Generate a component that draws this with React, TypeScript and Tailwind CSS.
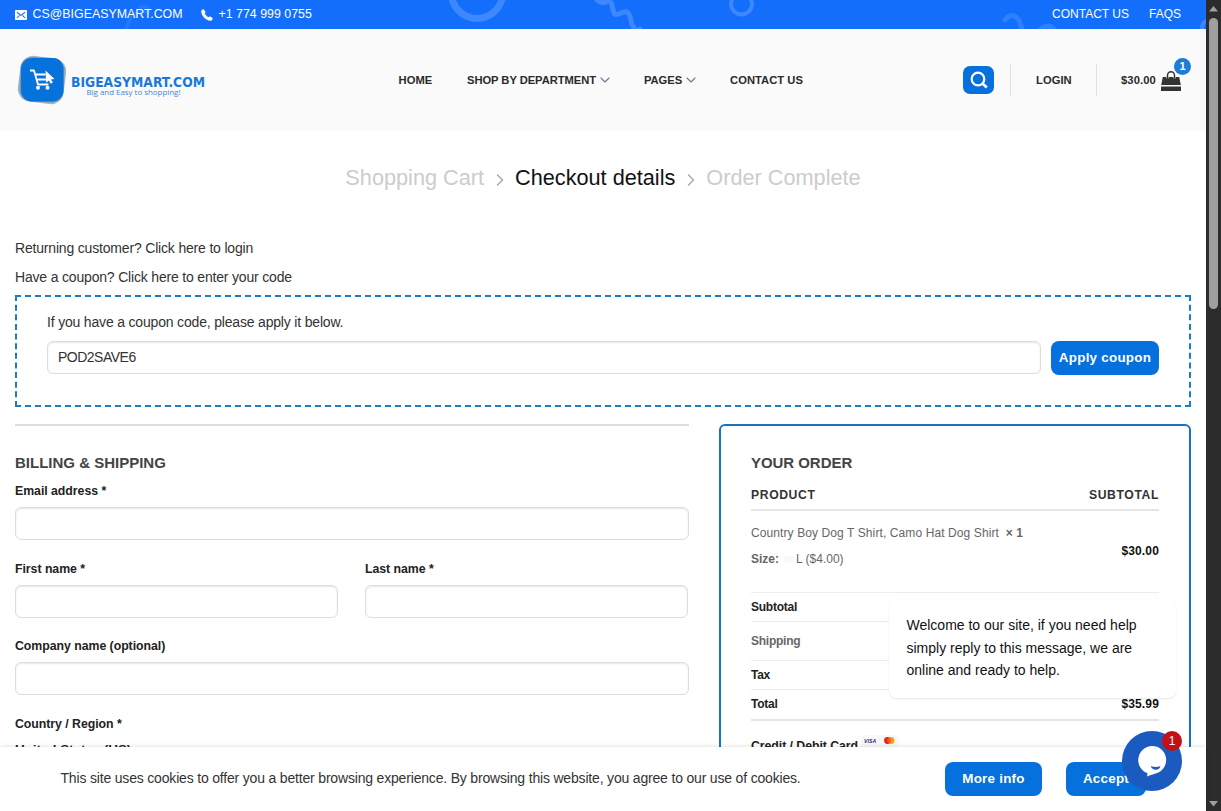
import type { ReactNode } from 'react';
import { ChevronDown, ChevronRight } from 'lucide-react';

const FONT = "font-['Liberation_Sans',Arial,sans-serif]";

const TopBar = () => (
  <div className="relative h-[29px] bg-[#126efb] overflow-hidden text-white text-[12.4px] leading-[29px]">
    {/* Background doodles */}
    <svg className="absolute inset-0" width="1206" height="29" fill="none" stroke="#3d88ff" strokeLinecap="round">
      <circle cx="477" cy="-7" r="25.5" strokeWidth="7" />
      <path d="M597 0q4 4 9 2t6 3 2 8 7 0 8 1 2 7 4 8 5 0" strokeWidth="5" strokeLinejoin="round" />
      <circle cx="741.500" cy="4" r="10.500" strokeWidth="4" />
      <path d="M1005 20q7-9 14 0l3 9M1041 29q7-6 13 0" strokeWidth="5" stroke="#2f80fd" />
      <path d="M140 7q9-3 8 5-12-3-17 6l-5 10" strokeWidth="4" stroke="#2478ff" />
      <path d="M1202 29q0-6 4-8" strokeWidth="4" />
    </svg>
    <div className="relative flex justify-between pl-[15px] pr-[25px]">
      <div className="flex">
        <div className="flex items-center h-[28px] w-[186px]">
          <svg width="12" height="10" viewBox="0 0 12 10" className="mr-[5.500px] mt-px">
            <rect width="12" height="10" rx="0.8" fill="white" />
            <path d="M2 2.2l4 3.2 4-3.2M2 8l2.5-2.7M10 8L7.500 5.300" fill="none" stroke="#126efb" strokeWidth="1.1" />
          </svg>
          <span className="whitespace-nowrap">CS@BIGEASYMART.COM</span>
        </div>
        <div className="flex items-center h-[28px]">
          <svg width="12" height="12" viewBox="0 0 12 12" className="mr-[5.500px] mt-px" fill="white">
            <path d="M2.600.3L4.700 2.900 3.700 4.600C4.400 6.100 5.800 7.500 7.400 8.300L9 7.200 11.800 9.200C11.500 10.800 10.500 11.800 9.400 11.800 4.700 11.500.5 7.100.2 2.600.2 1.500 1.200.5 2.600.3z" />
          </svg>
          <span className="whitespace-nowrap">+1 774 999 0755</span>
        </div>
      </div>
      <div className="flex gap-5 text-[12px]">
        <span>CONTACT US</span>
        <span>FAQS</span>
      </div>
    </div>
  </div>
);

const Logo = () => (
  <svg width="200" height="52" viewBox="0 0 200 52">
    <rect x="3" y="3" width="46" height="46" rx="13" fill="#a3b3c1" transform="rotate(7 26 26)" />
    <rect x="4" y="3.500" width="44" height="44.500" rx="12" fill="#7d9ab4" transform="rotate(3 26 26)" />
    <rect x="5" y="4" width="42.500" height="43.500" rx="11" fill="#0672dc" />
    <path d="M14 16.500h4l4 14h10.500M19.500 20.500h10M21 25.500h11" fill="none" stroke="white" strokeWidth="1.800" strokeLinejoin="round" />
    <path d="M29.500 16.500l9 8.500-3.600.4 2 3.200-2.100 1.200-2-3.300-2.700 2.300z" fill="white" />
    <circle cx="22" cy="33.800" r="2" fill="white" />
    <circle cx="31.500" cy="33.800" r="2" fill="white" />
    <text x="55" y="32.500" textLength="134" lengthAdjust="spacingAndGlyphs" fill="#1878da" fontFamily="DejaVu Sans" fontSize="13.500" fontWeight="700" letterSpacing="0">BIGEASYMART.COM</text>
    <text x="70.500" y="40.500" textLength="94" lengthAdjust="spacingAndGlyphs" fill="#3f86d6" fontFamily="Open Sans" fontSize="7.800" fontWeight="400" letterSpacing="0">Big and Easy to shopping!</text>
  </svg>
);

const Header = () => (
  <header className="flex items-center h-[102px] bg-[#fafafa] pl-[16px] text-[11.2px] font-bold text-[#2a2a2a] tracking-[0.05px]">
    <div className="w-[382px]">
      <Logo />
    </div>
    <nav className="flex items-center w-[565px]">
      <span className="w-[69px] pl-[0.5px]">HOME</span>
      <span className="w-[177px] flex items-center gap-px whitespace-nowrap tracking-[-0.05px]">
        SHOP BY DEPARTMENT <ChevronDown className="w-[16px] h-[16px] -my-1 text-[#777]" strokeWidth={1.6} />
      </span>
      <span className="w-[86px] flex items-center gap-px tracking-[-0.05px]">
        PAGES <ChevronDown className="w-[16px] h-[16px] -my-1 text-[#777]" strokeWidth={1.6} />
      </span>
      <span>CONTACT US</span>
    </nav>
    <button className="flex items-center justify-center w-[31px] h-[28px] rounded-[7px] bg-[#0670dc] text-white">
      <svg width="18" height="18" viewBox="0 0 18 18" fill="none" stroke="currentColor">
        <circle cx="8" cy="8" r="6.300" strokeWidth="2.200" />
        <path d="M12.500 12.500l4.300 4" strokeWidth="2.700" />
      </svg>
    </button>
    <div className="w-px h-[32px] bg-[#e2e2e2] ml-[16px]" />
    <span className="w-[85px] pl-[25px]">LOGIN</span>
    <div className="w-px h-[32px] bg-[#e2e2e2]" />
    <span className="w-[40px] ml-[24px] tracking-[0.1px]">$30.00</span>
    <div className="relative w-[20px] h-[21px]">
      <svg width="20" height="21" viewBox="0 0 20 21">
        <path d="M1.800 7h16.400l1.600 8H.2zM0 16.500h20V21H0z" fill="#333" />
        <path d="M6.500 8.500V5.200a3.500 3.500 0 0 1 7 0v3.300" fill="none" stroke="#fafafa" strokeWidth="2.400" />
        <path d="M6.500 9V5.200a3.500 3.500 0 0 1 7 0V9" fill="none" stroke="#333" strokeWidth="1.500" />
      </svg>
      <span className="absolute left-[13px] top-[-12px] w-[17px] h-[17px] rounded-full bg-[#1c7cd8] text-white text-[11px] leading-[17px] text-center">1</span>
    </div>
  </header>
);

const Steps = () => (
  <div className="flex items-center justify-center h-[95px] text-[21.7px] text-[#ccc] whitespace-nowrap">
    <span>Shopping Cart</span>
    <ChevronRight className="w-[20px] h-[20px] mx-[5.500px] mt-[2px] text-[#aaa]" strokeWidth={1.8} />
    <span className="text-[#111]">Checkout details</span>
    <ChevronRight className="w-[20px] h-[20px] mx-[5.500px] mt-[2px] text-[#aaa]" strokeWidth={1.8} />
    <span>Order Complete</span>
  </div>
);

const Coupon = () => (
  <section className="h-[112px] border-2 border-dashed border-[#1c7dc4] px-[30px] pt-[15px]">
    <p className="leading-[20px]">If you have a coupon code, please apply it below.</p>
    <div className="flex items-start gap-[10px] mt-[9px]">
      <div className="flex-1 h-[33px] rounded-[6px] border border-[#ddd] shadow-[inset_0_1px_2px_rgba(0,0,0,0.1)] pl-[10px] leading-[31px] tracking-[-0.5px]">POD2SAVE6</div>
      <button className="w-[108px] h-[34px] rounded-[8px] bg-[#0670dc] text-white font-bold text-[13.400px] tracking-[0.25px]">Apply coupon</button>
    </div>
  </section>
);

const Field = ({ label, className = '' }: { label: string; className?: string }) => (
  <div className={className}>
    <label className="block h-[25px] leading-[19px] text-[12.300px] tracking-[-0.03px] font-bold text-[#222]">{label}</label>
    <div className="h-[33px] rounded-[6px] border border-[#ddd] shadow-[inset_0_1px_2px_rgba(0,0,0,0.1)]" />
  </div>
);

const Billing = () => (
  <section className="w-[674px] border-t-2 border-[#ddd] pt-[27px]">
    <h3 className="text-[15px] leading-[20px] tracking-normal font-bold text-[#444]">BILLING &amp; SHIPPING</h3>
    <Field label="Email address *" className="mt-[9px]" />
    <div className="flex gap-[27px] mt-[20px]">
      <Field label="First name *" className="w-[323px]" />
      <Field label="Last name *" className="w-[323px]" />
    </div>
    <Field label="Company name (optional)" className="mt-[19px]" />
    <div className="mt-[19px] text-[12.300px] tracking-[-0.03px] font-bold text-[#222]">
      <p className="leading-[20px]">Country / Region *</p>
      <p className="mt-[6px] leading-[20px] text-[13.400px]">United States (US)</p>
    </div>
  </section>
);

const Row = ({ children, className }: { children: ReactNode; className: string }) => (
  <div className={`flex items-center justify-between border-b border-[#ececec] ${className}`}>{children}</div>
);

const Order = () => (
  <section className="w-[472px] h-[420px] border-2 border-[#1673c2] rounded-t-[6px] px-[30px] pt-[27px] text-[12px] font-bold tracking-[-0.25px] text-[#222]">
    <h3 className="text-[15px] leading-[20px] tracking-[-0.05px] text-[#444]">YOUR ORDER</h3>
    <div className="flex items-center justify-between h-[38px] pt-[8px] border-b-[2px] border-[#e5e5e5] text-[12.200px] tracking-[0.6px] text-[#333]">
      <span>PRODUCT</span>
      <span>SUBTOTAL</span>
    </div>
    <Row className="h-[82px]">
      <div className="self-start pt-[9px] font-normal text-[#666] leading-[26px] tracking-normal">
        <p className="tracking-[0.1px]">Country Boy Dog T Shirt, Camo Hat Dog Shirt&nbsp; <b>× 1</b></p>
        <p><b>Size:</b><span className="inline-block w-[10px] h-[7px] ml-[5px] mr-[2px] bg-[#f9f9f9]" />L ($4.00)</p>
      </div>
      <span className="text-[#111] tracking-[0.15px] pb-[2px]">$30.00</span>
    </Row>
    <Row className="h-[29px]">Subtotal</Row>
    <Row className="h-[39px] text-[#666]">Shipping</Row>
    <Row className="h-[29px]">Tax</Row>
    <div className="flex items-center justify-between h-[31px] pb-[2px] border-b-2 border-[#e5e5e5]">
      <span>Total</span>
      <span className="text-[#111] tracking-[0.15px]">$35.99</span>
    </div>
    <div className="flex mt-[14px] text-[12.300px] tracking-[-0.05px] leading-[20px]">
      <span className="w-[107px] pt-[0.5px] whitespace-nowrap">Credit / Debit Card</span>
      <svg width="38" height="14" viewBox="0 0 38 14" className="ml-[3px]">
        <rect width="38" height="14" rx="2" fill="#f8f8f8" />
        <text x="3" y="8" textLength="12" fontSize="5" fontWeight="700" fontStyle="italic" fill="#1f2b65">VISA</text>
        <circle cx="26.500" cy="5.500" r="3.400" fill="#e2231a" />
        <circle cx="30" cy="5.500" r="3.400" fill="#f79e1b" />
        <ellipse cx="28.250" cy="5.500" rx="1.600" ry="2.900" fill="#f0571d" />
      </svg>
    </div>
  </section>
);

const CookieBar = () => (
  <div className="absolute left-0 bottom-0 w-[1206px] h-[64px] flex items-center bg-white pl-[60.5px] shadow-[0_0_5px_rgba(0,0,0,0.15)]">
    <p className="w-[884.5px] pb-px">
      This site uses cookies to offer you a better browsing experience. By browsing this website, you agree to our use of cookies.
    </p>
    <button className="w-[97px] h-[34px] rounded-[8px] bg-[#0670dc] text-white font-bold text-[13.400px] tracking-[0.25px]">More info</button>
    <button className="w-[80px] h-[34px] ml-[24px] rounded-[8px] bg-[#0670dc] text-white font-bold text-[13.400px] tracking-[0.25px]">Accept</button>
  </div>
);

const Chat = () => (
  <>
    <div className="absolute left-[889px] top-[600px] w-[287px] h-[98px] rounded-[8px] bg-white pl-[17.500px] pt-[14px] text-[14px] leading-[22.500px] tracking-normal text-[#111] shadow-[0_1px_2px_rgba(0,0,0,0.1)]">
      Welcome to our site, if you need help<br />
      simply reply to this message, we are<br />
      online and ready to help.
    </div>
    <div className="absolute left-[1122px] top-[731px] w-[60px] h-[60px] rounded-full bg-[#1b5bc0]">
      <svg width="60" height="60" viewBox="0 0 60 60">
        <path d="M30 15a14 14 0 0 1 4.500 27.300Q31.500 43 25 45.500l.6-3.300A14 14 0 0 1 30 15z" fill="white" />
        <path d="M28.800 35q4.800 2 9.600 0-.8 3.800-4.600 3.800T28.800 35z" fill="#1b5bc0" />
      </svg>
      <span className="absolute left-[40px] top-0 w-[20px] h-[20px] rounded-full bg-[#c40f16] text-white text-[12px] leading-[20px] text-center">1</span>
    </div>
  </>
);

const Scrollbar = () => (
  <div className="flex flex-col items-center justify-between w-[15px] h-full bg-[#2c2c2c] pt-[6px] pb-[4px]">
    <div className="flex flex-col items-center gap-[6px]">
      <svg width="9" height="6"><path d="M4.500 0L9 5.500H0z" fill="#9f9f9f" /></svg>
      <div className="w-[9px] h-[291px] rounded-full bg-[#9f9f9f]" />
    </div>
    <svg width="9" height="6"><path d="M4.500 5.500L9 0H0z" fill="#9f9f9f" /></svg>
  </div>
);

export default function App() {
  return (
    <div className={`relative flex w-[1221px] h-[811px] overflow-hidden bg-white text-[14px] text-[#333] ${FONT}`}>
      <div className="w-[1206px] h-full overflow-hidden">
        <TopBar />
        <Header />
        <main className="px-[15px]">
          <Steps />
          <div className="tracking-[-0.18px]">
            <p className="mt-[12px] leading-[20px]">Returning customer? Click here to login</p>
            <p className="mt-[9px] mb-[8px] leading-[20px]">Have a coupon? Click here to enter your code</p>
            <Coupon />
          </div>
          <div className="flex items-start gap-[30px] mt-[17px]">
            <Billing />
            <Order />
          </div>
        </main>
      </div>
      <Scrollbar />
      <div className="tracking-[-0.18px]">
        <CookieBar />
      </div>
      <Chat />
    </div>
  );
}
